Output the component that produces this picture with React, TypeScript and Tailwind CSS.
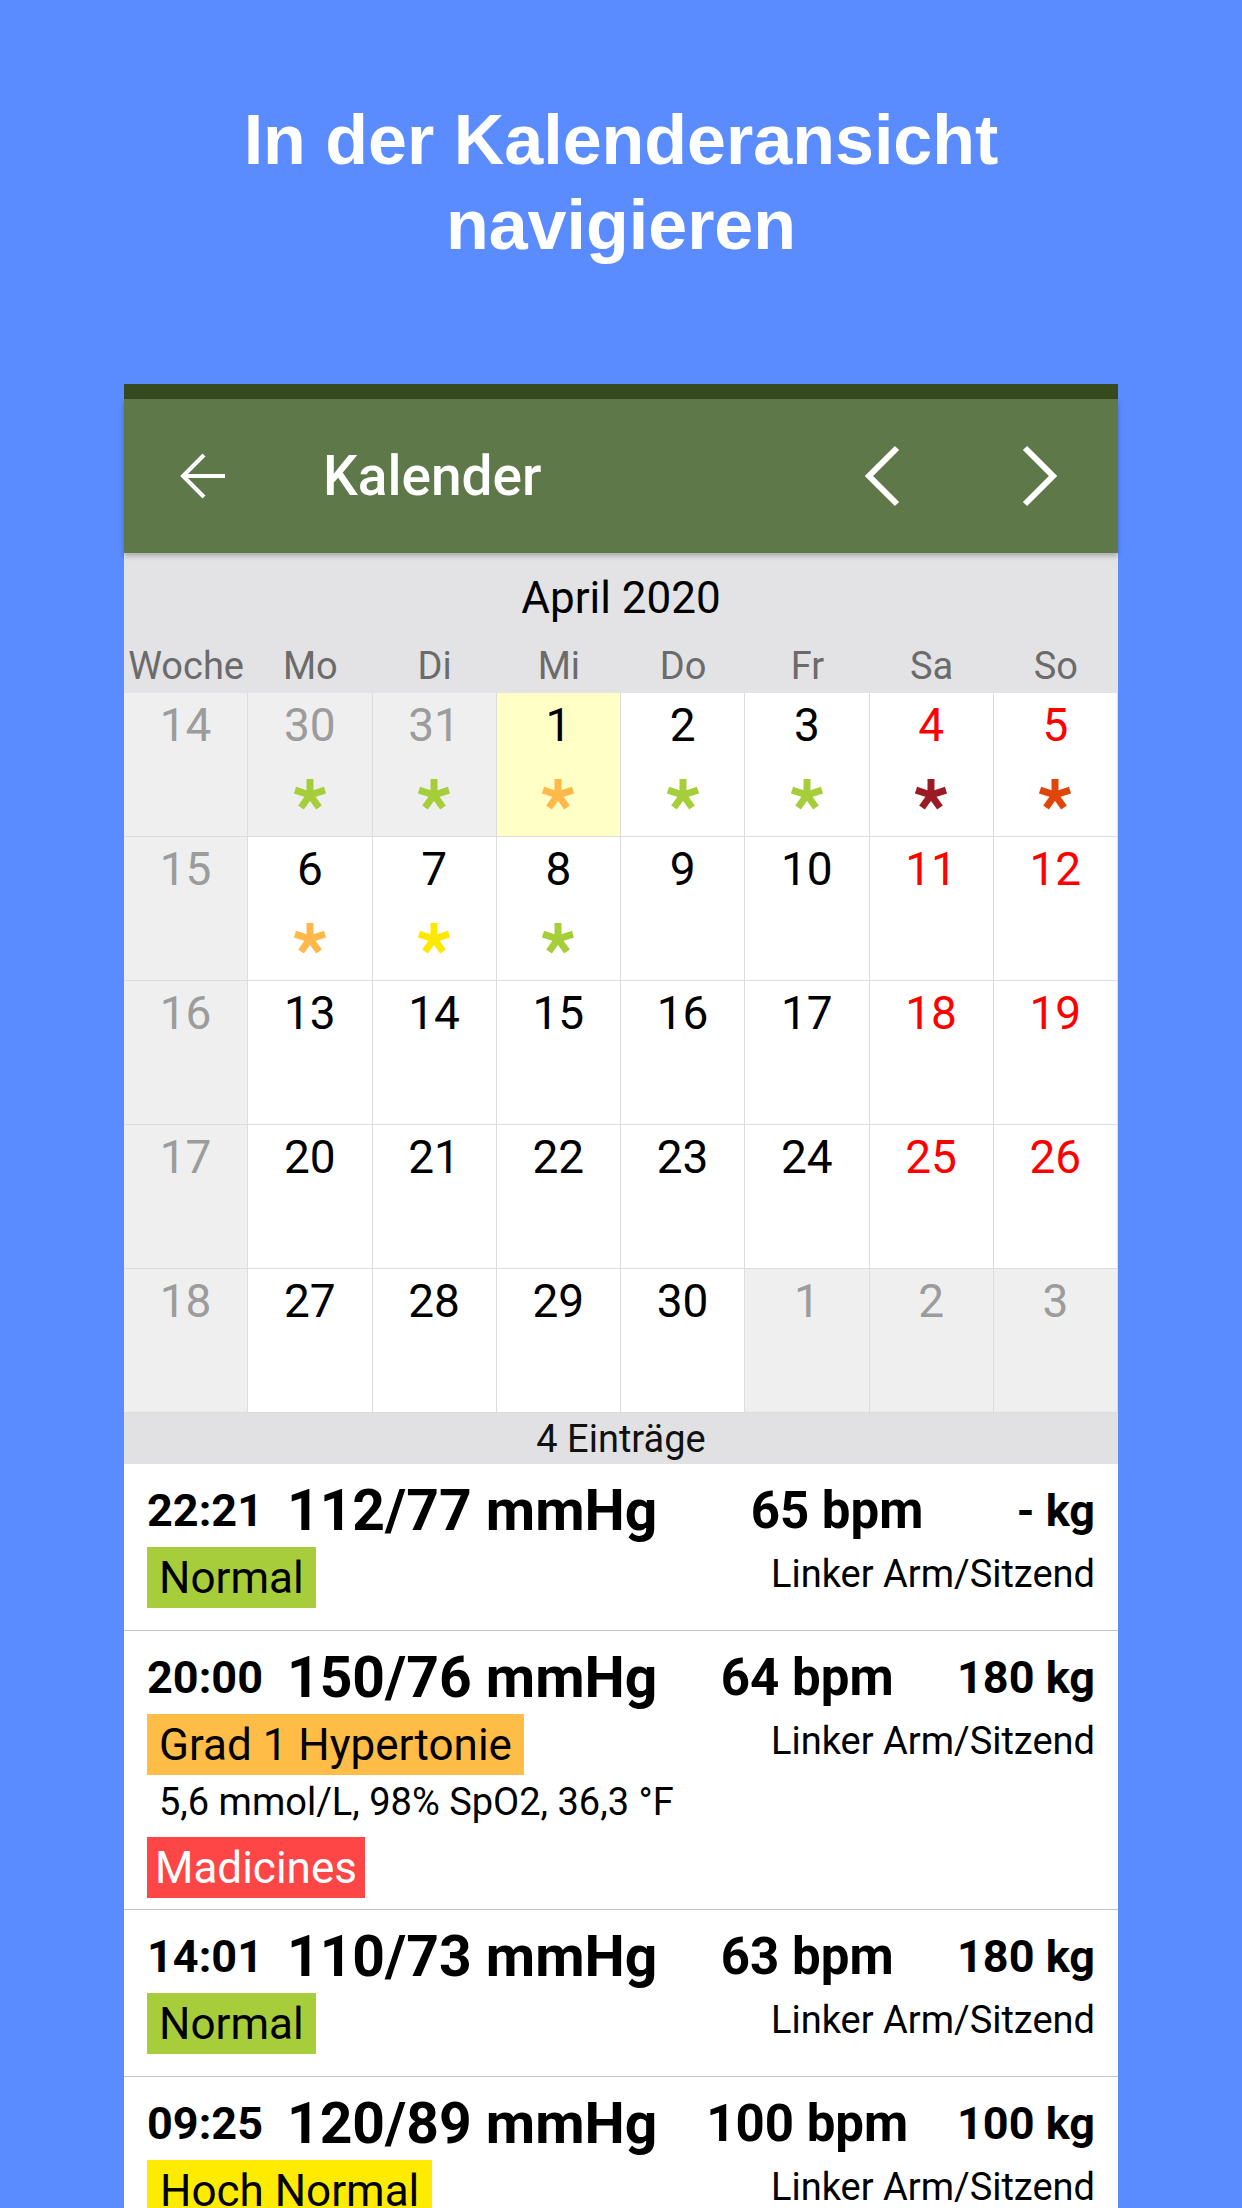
import React from "react";

type Day = { n: number; muted?: boolean; weekend?: boolean; today?: boolean; star?: string };

const weeks: { w: number; days: Day[] }[] = [
  {
    w: 14,
    days: [
      { n: 30, muted: true, star: "#a6cd3a" },
      { n: 31, muted: true, star: "#a6cd3a" },
      { n: 1, today: true, star: "#ffb84a" },
      { n: 2, star: "#a6cd3a" },
      { n: 3, star: "#a6cd3a" },
      { n: 4, weekend: true, star: "#9b1b25" },
      { n: 5, weekend: true, star: "#e0460a" },
    ],
  },
  {
    w: 15,
    days: [
      { n: 6, star: "#ffb84a" },
      { n: 7, star: "#ffe800" },
      { n: 8, star: "#a6cd3a" },
      { n: 9 },
      { n: 10 },
      { n: 11, weekend: true },
      { n: 12, weekend: true },
    ],
  },
  {
    w: 16,
    days: [{ n: 13 }, { n: 14 }, { n: 15 }, { n: 16 }, { n: 17 }, { n: 18, weekend: true }, { n: 19, weekend: true }],
  },
  {
    w: 17,
    days: [{ n: 20 }, { n: 21 }, { n: 22 }, { n: 23 }, { n: 24 }, { n: 25, weekend: true }, { n: 26, weekend: true }],
  },
  {
    w: 18,
    days: [
      { n: 27 },
      { n: 28 },
      { n: 29 },
      { n: 30 },
      { n: 1, muted: true },
      { n: 2, muted: true },
      { n: 3, muted: true },
    ],
  },
];

const entries = [
  { time: "22:21", bp: "112/77 mmHg", bpm: "65 bpm", kg: "- kg", badge: "Normal", color: "bg-[#a7cd3a]", px: "px-[12px]" },
  {
    time: "20:00",
    bp: "150/76 mmHg",
    bpm: "64 bpm",
    kg: "180 kg",
    badge: "Grad 1 Hypertonie",
    color: "bg-[#ffbc47]",
    px: "px-[12px]",
    note: "5,6 mmol/L, 98% SpO2, 36,3 °F",
    med: "Madicines",
  },
  { time: "14:01", bp: "110/73 mmHg", bpm: "63 bpm", kg: "180 kg", badge: "Normal", color: "bg-[#a7cd3a]", px: "px-[12px]" },
  { time: "09:25", bp: "120/89 mmHg", bpm: "100 bpm", kg: "100 kg", badge: "Hoch Normal", color: "bg-[#ffeb00]", px: "px-[13px]" },
];

const Star = ({ color }: { color: string }) => (
  <svg width="34" height="32" viewBox="0 0 34 32">
    <g stroke={color} strokeWidth="7" strokeLinecap="butt">
      <line x1="17" y1="17" x2="17" y2="1" />
      <line x1="17" y1="17" x2="32" y2="12.2" />
      <line x1="17" y1="17" x2="2" y2="12.2" />
      <line x1="17" y1="17" x2="26" y2="29.5" />
      <line x1="17" y1="17" x2="8" y2="29.5" />
    </g>
  </svg>
);

const DayCell = ({ day }: { day: Day }) => {
  const bg = day.today ? "bg-[#ffffc6]" : day.muted ? "bg-[#efefef]" : "bg-white";
  const fg = day.muted ? "text-[#9c9c9c]" : day.weekend ? "text-[#ff0000]" : "text-black";
  return (
    <div className={`flex h-[144px] flex-col items-center border-r border-b border-[#dcdcdc] pt-[9px] ${bg}`}>
      <span className={`text-[46px] leading-[46px] ${fg}`}>{day.n}</span>
      <div className="mt-[30px] h-[32px]">{day.star && <Star color={day.star} />}</div>
    </div>
  );
};

const App = () => {
  return (
    <div className="flex h-[2208px] w-[1242px] flex-col items-center overflow-hidden bg-[#5b8cff]">
      <h1 className="pt-[98px] text-center font-['Liberation_Sans',sans-serif] text-[70px] font-bold leading-[85px] text-white">
        In der Kalenderansicht
        <br />
        navigieren
      </h1>

      <div className="mt-[116px] flex w-[994px] flex-col bg-white font-[Roboto,sans-serif]">
        <div className="h-[15px] bg-[#354a1f]" />
        <div className="relative z-10 flex h-[154px] items-center bg-[#5f7849] pl-[56px] pr-[60px] shadow-[0_3px_5px_rgba(0,0,0,0.25)]">
          <svg width="46" height="46" viewBox="0 0 46 46" fill="none" stroke="white" strokeWidth="4">
            <path d="M2 23 H45" />
            <path d="M24 2 L3 23 L24 44" />
          </svg>
          <span className="ml-[97px] text-[55px] font-medium leading-none text-white">Kalender</span>
          <div className="ml-auto flex items-center gap-[118px]">
            <svg width="38" height="62" viewBox="0 0 38 62" fill="none" stroke="white" strokeWidth="6">
              <path d="M33 3 L5 31 L33 59" />
            </svg>
            <svg width="38" height="62" viewBox="0 0 38 62" fill="none" stroke="white" strokeWidth="6">
              <path d="M5 3 L33 31 L5 59" />
            </svg>
          </div>
        </div>

        <div className="flex flex-col bg-[#e3e3e5] pt-[23px] pb-[8px]">
          <div className="text-center text-[44px] leading-[44px] text-black">April 2020</div>
          <div className="mt-[27px] grid grid-cols-8 text-center text-[38px] leading-[38px] text-[#6b6b6b]">
            {["Woche", "Mo", "Di", "Mi", "Do", "Fr", "Sa", "So"].map((d) => (
              <span key={d}>{d}</span>
            ))}
          </div>
        </div>

        <div className="grid grid-cols-8">
          {weeks.map((wk) => (
            <React.Fragment key={wk.w}>
              <div className="flex h-[144px] flex-col items-center border-r border-b border-[#dcdcdc] bg-[#efefef] pt-[9px]">
                <span className="text-[46px] leading-[46px] text-[#9c9c9c]">{wk.w}</span>
              </div>
              {wk.days.map((d, i) => (
                <DayCell key={i} day={d} />
              ))}
            </React.Fragment>
          ))}
        </div>

        <div className="flex h-[51px] items-center justify-center bg-[#e1e1e3] text-[38px] leading-none text-[#111]">
          4 Einträge
        </div>

        {entries.map((e) => (
          <div key={e.time} className={`flex flex-col border-b border-[#c4c4c4] px-[23px] pt-[18px] ${e.med ? "pb-[11px]" : "pb-[22px]"}`}>
            <div className="flex h-[56px] items-center justify-between font-bold leading-none text-black">
              <div className="flex items-center gap-[24px]">
                <span className="text-[45px]">{e.time}</span>
                <span className="text-[57px]">{e.bp}</span>
              </div>
              <span className="text-[51px]">{e.bpm}</span>
              <span className="text-[45px]">{e.kg}</span>
            </div>
            <div className="mt-[9px] flex items-start justify-between">
              <span className={`flex h-[61px] items-center text-[44px] leading-none text-black ${e.color} ${e.px}`}>{e.badge}</span>
              <span className="mt-[8px] text-[38px] leading-[38px] text-black">Linker Arm/Sitzend</span>
            </div>
            {e.note && <div className="mt-[8px] pl-[12px] text-[38px] leading-[38px] text-black">{e.note}</div>}
            {e.med && (
              <div className="mt-[16px] flex">
                <span className="flex h-[61px] items-center bg-[#ff4646] px-[8px] text-[44px] leading-none text-white">{e.med}</span>
              </div>
            )}
          </div>
        ))}
      </div>
    </div>
  );
};

export default App;
